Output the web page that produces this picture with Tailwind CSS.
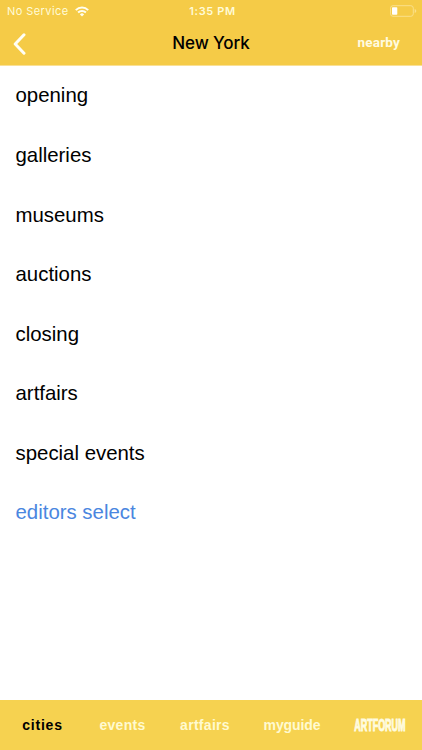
<!DOCTYPE html>
<html lang="en">
<head>
  <meta charset="UTF-8" />
  <meta name="viewport" content="width=device-width, initial-scale=1.0"/>
  <title>New York</title>
  <script src="https://cdn.jsdelivr.net/npm/@tailwindcss/browser@4"></script>
</head>
<body class="h-screen overflow-hidden bg-white flex flex-col font-['Liberation_Sans',Arial,sans-serif]">

  <header class="h-[66px] shrink-0 bg-[#f5cb47] border-b border-[#f9e096]">
    <!-- Status bar -->
    <div class="h-[22px] grid grid-cols-3 items-center pl-[7px] pr-[5px] font-[Inter,sans-serif] text-[#fffbd8]">
      <div class="flex items-center gap-[6px]">
        <span class="text-[11px] leading-[22px] tracking-[0.42px] whitespace-nowrap">No Service</span>
        <svg class="w-[14px] h-[11px]" viewBox="0 0 14 11" fill="none" stroke="#fffef0" stroke-width="2">
          <path d="M0.8 4.1a8.8 8.8 0 0 1 12.4 0" />
          <path d="M3.1 6.5a5.5 5.5 0 0 1 7.8 0" />
          <path d="M7 10.6 4.9 8.4a3 3 0 0 1 4.2 0z" fill="#fffef0" stroke="none" />
        </svg>
      </div>
      <span class="pl-px text-center text-[11px] leading-[22px] font-semibold tracking-[0.6px]">1:35 PM</span>
      <svg class="w-[28px] h-[12px] justify-self-end" viewBox="0 0 28 12">
        <rect x="1.5" y="0.7" width="22.8" height="10.6" rx="2.5" fill="none" stroke="#fae08a" />
        <rect x="3" y="2.2" width="5.3" height="7.6" rx="0.8" fill="#fff" />
        <path d="M25.7 4v4q1.6-.7 1.6-2t-1.6-2z" fill="#fae08a" />
      </svg>
    </div>

    <!-- Navigation bar -->
    <nav class="h-[43px] grid grid-cols-3 items-center pl-[13px] pr-[22px]">
      <svg class="w-[14px] h-[22px]" viewBox="0 0 14 22" fill="none" stroke="#fffef5" stroke-width="3" stroke-linecap="round" stroke-linejoin="round">
        <path d="M11 1.8 2.2 11l8.8 9.2" />
      </svg>
      <h1 class="pl-[9px] text-center text-[17px] font-medium tracking-[-0.1px] whitespace-nowrap text-black font-[Inter,sans-serif]">New York</h1>
      <span class="relative -top-px justify-self-end text-[13.5px] font-bold tracking-[0.2px] text-[#fffbe0] font-[Roboto,sans-serif]">nearby</span>
    </nav>
  </header>

  <main class="flex-1 text-[20.4px] text-black">
    <ul>
      <li class="h-[59.55px] flex items-center pl-[15.5px]">opening</li>
      <li class="h-[59.55px] flex items-center pl-[15.5px]">galleries</li>
      <li class="h-[59.55px] flex items-center pl-[15.5px]">museums</li>
      <li class="h-[59.55px] flex items-center pl-[15.5px]">auctions</li>
      <li class="h-[59.55px] flex items-center pl-[15.5px]">closing</li>
      <li class="h-[59.55px] flex items-center pl-[15.5px]">artfairs</li>
      <li class="h-[59.55px] flex items-center pl-[15.5px]">special events</li>
      <li class="h-[59.55px] flex items-center pl-[15.5px] text-[#4a86e0]">editors select</li>
    </ul>
  </main>

  <!-- Tab bar -->
  <footer class="h-[50px] shrink-0 bg-[#f6d250] flex items-center text-center text-[14px] font-bold tracking-[0.3px] text-[#fffad0]">
    <span class="w-[85px] text-black tracking-[0.8px]">cities</span>
    <span class="w-[75px]">events</span>
    <span class="w-[90px]">artfairs</span>
    <span class="w-[84px] tracking-[-0.1px]">myguide</span>
    <svg class="ml-[19px] w-[54px] h-[22px] tracking-normal" viewBox="0 0 54 22">
      <text transform="translate(1.2 17.2) scale(0.545 1)" font-size="16.5" fill="#fffce0" stroke="#fffce0" stroke-width="1">ARTFORUM</text>
    </svg>
  </footer>

</body>
</html>
